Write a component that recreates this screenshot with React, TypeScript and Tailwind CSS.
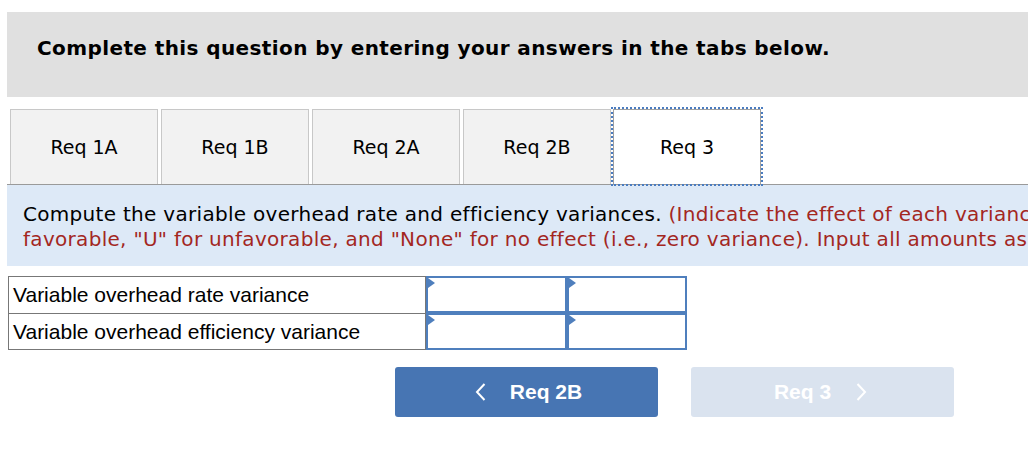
const tabs = ['Req 1A', 'Req 1B', 'Req 2A', 'Req 2B']

function InputCell() {
  return (
    <div className="relative h-full border-2 border-[#4f7fbd] bg-white">
      <span className="absolute left-0 top-0 h-0 w-0 border-y-[5px] border-l-[7px] border-y-transparent border-l-[#4f7fbd]" />
    </div>
  )
}

function Chevron({ dir }: { dir: 'left' | 'right' }) {
  return (
    <svg width="11" height="18" viewBox="0 0 11 18" fill="none" stroke="currentColor" strokeWidth="2">
      {dir === 'left' ? <polyline points="9.5,1 2,9 9.5,17" /> : <polyline points="1.5,1 9,9 1.5,17" />}
    </svg>
  )
}

export default function App() {
  const verdana = "font-['DejaVu_Sans','Verdana',sans-serif]"
  return (
    <div className="h-[464px] w-[1028px] overflow-hidden bg-white">
      <div className="ml-[7px] w-[1200px] pt-[12px]">
        <div className="h-[85px] bg-[#e0e0e0] pl-[30px] pt-[23px]">
          <h1 className={`${verdana} text-[20px] font-bold leading-[26px] tracking-[0.4px] text-black`}>
            Complete this question by entering your answers in the tabs below.
          </h1>
        </div>

        <div className="mt-[10px] flex items-end gap-[3px] border-b border-[#9a9a9a] pl-[3px]">
          {tabs.map((t) => (
            <div
              key={t}
              className={`${verdana} mt-[2px] flex h-[75px] w-[148px] items-center justify-center border border-b-0 border-[#c8c8c8] bg-[#f2f2f2] pt-[1px] text-[19px] text-black`}
            >
              {t}
            </div>
          ))}
          <div className="-mb-[2px] -ml-[3px] border-2 border-dotted border-[#4a7cc0]">
            <div
              className={`${verdana} flex h-[75px] w-[148px] items-center justify-center border border-b-0 border-[#a0a0a0] bg-white pt-[1px] text-[19px] text-black`}
            >
              Req 3
            </div>
          </div>
        </div>

        <div
          className={`${verdana} h-[81px] bg-[#dde9f7] pl-[16px] pt-[17px] text-[20px] leading-[25px] tracking-[0.3px] whitespace-nowrap text-black`}
        >
          <p>
            Compute the variable overhead rate and efficiency variances.{' '}
            <span className="text-[#a3271f]">(Indicate the effect of each variance by selecting "F" for</span>
          </p>
          <p className="text-[#a3271f]">
            favorable, "U" for unfavorable, and "None" for no effect (i.e., zero variance). Input all amounts as positive values.)
          </p>
        </div>

        <div className="ml-[1px] mt-[10px] w-[679px] font-['Liberation_Sans',Arial,sans-serif] text-[21px] text-black">
          {['Variable overhead rate variance', 'Variable overhead efficiency variance'].map((label, i) => (
            <div key={label} className="grid h-[37px] grid-cols-[418px_141px_120px]">
              <div className={`flex items-center border-x border-[#777] pl-[4px] ${i === 0 ? 'border-t' : 'border-y'}`}>
                {label}
              </div>
              <InputCell />
              <InputCell />
            </div>
          ))}
        </div>

        <div className="mt-[17px] flex gap-[33px] pl-[388px] font-['Liberation_Sans',Arial,sans-serif]">
          <button className="flex h-[50px] w-[263px] items-center justify-center gap-[24px] rounded-[3px] bg-[#4775b3] pl-[4px] text-[21px] font-bold text-white">
            <Chevron dir="left" />
            Req 2B
          </button>
          <button className="flex h-[50px] w-[263px] items-center justify-center gap-[25px] rounded-[3px] bg-[#dae3ef] pr-[4px] text-[21px] font-bold text-white">
            Req 3
            <Chevron dir="right" />
          </button>
        </div>
      </div>
    </div>
  )
}
